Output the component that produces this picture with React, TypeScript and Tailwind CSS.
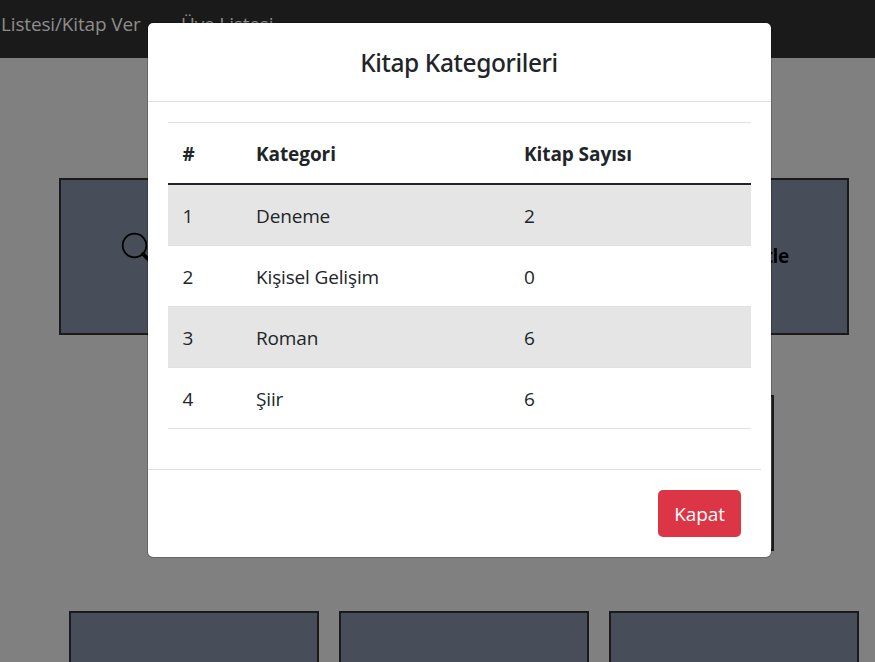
import React from "react";

type Row = { id: number; name: string; count: number };

const rows: Row[] = [
  { id: 1, name: "Deneme", count: 2 },
  { id: 2, name: "Kişisel Gelişim", count: 0 },
  { id: 3, name: "Roman", count: 6 },
  { id: 4, name: "Şiir", count: 6 },
];

function Card({ children }: { children?: React.ReactNode }) {
  return (
    <div className="flex h-[156.6px] w-[250px] shrink-0 items-center border-2 border-[#1a1a1a] bg-[#474e5a]">
      {children}
    </div>
  );
}

function SearchIcon() {
  return (
    <svg width="32" height="32" viewBox="0 0 32 32" fill="none" stroke="#000">
      <circle cx="13.5" cy="13.5" r="11.8" strokeWidth="1.8" />
      <path d="M22 22 L29 29" strokeWidth="3.8" strokeLinecap="round" />
    </svg>
  );
}

function Dashboard() {
  return (
    <div className="h-full w-full">
      <nav className="flex h-[58px] gap-[40px] bg-[#1a1a1a] pt-[11px] pl-px text-[19px] leading-[26px] tracking-[-0.15px] whitespace-nowrap text-[#8d8d8d]">
        <span className="w-[140px]">Listesi/Kitap Ver</span>
        <span>Üye Listesi</span>
      </nav>
      <main className="flex flex-col gap-[60px] pt-[120px]">
        <div className="flex gap-5 pl-[59px]">
          <Card>
            <div className="mb-[16px] ml-[60px]">
              <SearchIcon />
            </div>
          </Card>
          <Card />
          <Card>
            <span className="ml-auto pr-[58px] text-[19px] font-bold tracking-[-0.3px] text-black">tle</span>
          </Card>
        </div>
        <div className="flex gap-5 pl-[254px]">
          <Card />
          <Card />
        </div>
        <div className="flex gap-5 pl-[69px]">
          <Card />
          <Card />
          <Card />
        </div>
      </main>
    </div>
  );
}

function CategoryModal() {
  return (
    <div className="absolute top-[22px] left-[147px] flex h-[536px] w-[625px] flex-col rounded-[6px] border border-black/20 bg-white bg-clip-padding text-[#212529]">
      <header className="flex h-[79px] items-center justify-center border-b border-[#dee2e6] pt-[2px]">
        <h5 className="pr-px font-['Noto_Sans','Open_Sans',sans-serif] text-[24.5px] leading-[36px] font-medium tracking-[-0.4px]">
          Kitap Kategorileri
        </h5>
      </header>
      <div className="h-[367px] px-5 pt-5">
        <table className="w-full table-fixed border-separate border-spacing-0 text-left text-[19px] leading-[28px] tracking-[-0.15px]">
          <colgroup>
            <col className="w-[73px]" />
            <col className="w-[268px]" />
            <col />
          </colgroup>
          <thead>
            <tr className="h-[63px] font-bold tracking-[-0.08px]">
              <th className="border-t border-b-2 border-t-[#dee2e6] border-b-[#212529] pt-px pr-[15px] pl-[14.5px]">#</th>
              <th className="border-t border-b-2 border-t-[#dee2e6] border-b-[#212529] px-[15px] pt-px">Kategori</th>
              <th className="border-t border-b-2 border-t-[#dee2e6] border-b-[#212529] px-[15px] pt-px">Kitap Sayısı</th>
            </tr>
          </thead>
          <tbody>
            {rows.map((r) => (
              <tr key={r.id} className="h-[61px] odd:bg-[#e5e5e5]">
                <td className="border-b border-[#dee2e6] pt-[3px] pr-[15px] pb-px pl-[14.5px]">{r.id}</td>
                <td className="border-b border-[#dee2e6] px-[15px] pt-[3px] pb-px">{r.name}</td>
                <td className="border-b border-[#dee2e6] px-[15px] pt-[3px] pb-px">{r.count}</td>
              </tr>
            ))}
          </tbody>
        </table>
      </div>
      <footer className="flex w-[613px] justify-end border-t border-[#dee2e6] pt-5 pr-5">
        <button className="h-[47px] w-[83px] rounded-[5px] bg-[#dc3545] pt-[2px] text-[19px] tracking-[-0.1px] text-white">
          Kapat
        </button>
      </footer>
    </div>
  );
}

export default function App() {
  return (
    <div className="relative h-[662px] w-[875px] overflow-hidden bg-[#808080] font-['Open_Sans','Noto_Sans',sans-serif]">
      <Dashboard />
      <CategoryModal />
    </div>
  );
}
